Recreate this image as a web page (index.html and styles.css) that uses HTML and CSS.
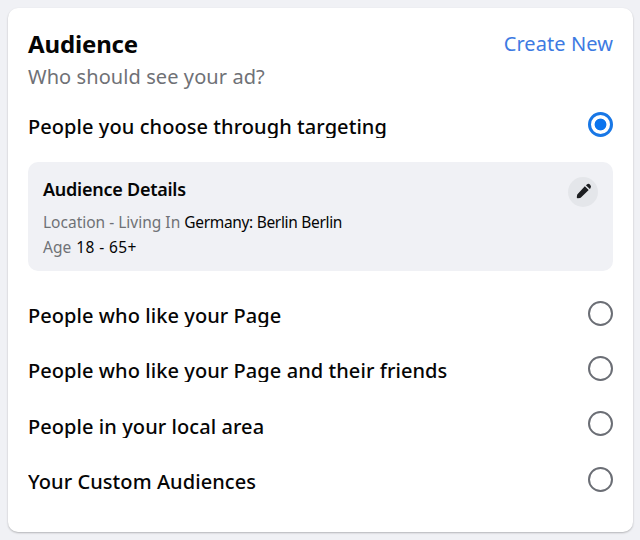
FILE: index.html
```html
<!DOCTYPE html>
<html lang="en">
<head>
<meta charset="utf-8">
<title>Audience</title>
<link rel="stylesheet" href="styles.css">
</head>
<body>
<main class="card">
  <header class="header">
    <h1 class="title">Audience</h1>
    <a class="create">Create New</a>
  </header>
  <p class="subtitle">Who should see your ad?</p>
  <div class="option first">
    <span class="label">People you choose through targeting</span>
    <span class="radio selected"></span>
  </div>
  <section class="details">
    <div class="info">
      <h2 class="details-title">Audience Details</h2>
      <p class="line"><span class="key">Location - Living In</span> <span class="value place">Germany: Berlin Berlin</span></p>
      <p class="line"><span class="key">Age</span> <span class="value age">18 - 65+</span></p>
    </div>
    <span class="edit">
      <svg width="30" height="30" viewBox="0 0 30 30" fill="#1c1e21">
        <path d="M16.8 9.3 20.7 13.1 13.2 20.2Q12.7 20.7 12 20.9L10 21.3Q8.7 21.5 8.8 20.3L9.1 18.1Q9.2 17.4 9.7 16.9Z"/>
        <path d="M17.9 8.2 18.9 7.4Q20.6 6.2 22.1 7.7 23.7 9.3 22.6 10.9L21.8 12Z"/>
      </svg>
    </span>
  </section>
  <div class="option"><span class="label">People who like your Page</span><span class="radio"></span></div>
  <div class="option"><span class="label">People who like your Page and their friends</span><span class="radio"></span></div>
  <div class="option lower"><span class="label">People in your local area</span><span class="radio"></span></div>
  <div class="option"><span class="label">Your Custom Audiences</span><span class="radio"></span></div>
</main>
</body>
</html>
```
FILE: styles.css
```css
* { box-sizing: border-box; }
body {
  margin: 0;
  padding: 8px 7px 8px 8px;
  height: 540px;
  overflow: hidden;
  background: #f0f1f5;
  font-family: "Noto Sans", "Open Sans", sans-serif;
  color: #050505;
}
h1, h2, p { margin: 0; }
.card {
  height: 524px;
  padding: 22px 20px 0;
  background: #fff;
  border-radius: 10px;
  box-shadow: 0 1px 2px rgba(0, 0, 0, 0.25);
}
.header { display: flex; justify-content: space-between; height: 32px; }
.title { font-size: 24px; line-height: 28px; font-weight: 700; letter-spacing: -0.15px; }
.create { font-size: 20px; line-height: 28px; letter-spacing: 0.08px; color: #3d7ae2; }
.subtitle { height: 50px; font-size: 20px; line-height: 30px; letter-spacing: 0.08px; color: #6f7176; }
.option {
  display: flex;
  justify-content: space-between;
  align-items: flex-start;
  height: 55px;
  white-space: nowrap;
}
.option.first { height: 50px; }
.option.lower { height: 56px; }
.label {
  height: 26px;
  overflow: hidden;
  font-size: 20px;
  line-height: 30px;
  font-weight: 500;
  letter-spacing: 0.07px;
}
.option.lower .label { height: 27px; line-height: 32px; }
.radio {
  width: 25px;
  height: 25px;
  border: 2px solid #6b6e75;
  border-radius: 50%;
}
.radio.selected {
  border: 3px solid #1877e6;
  background: radial-gradient(circle, #0b74ee 5.5px, #fff 6.3px);
}
.details {
  display: flex;
  justify-content: space-between;
  height: 109px;
  margin-bottom: 30px;
  padding: 15px;
  border-radius: 10px;
  background: #f0f1f5;
}
.details-title { height: 33px; font-size: 18px; line-height: 24px; font-weight: 600; letter-spacing: -0.25px; }
.line { font-size: 15.5px; line-height: 25px; white-space: nowrap; }
.key { color: #6f7176; }
.place { letter-spacing: -0.32px; }
.age { margin-left: 1px; letter-spacing: 0.4px; }
.edit {
  width: 30px;
  height: 30px;
  border-radius: 50%;
  background: #e4e6ea;
}
.edit svg { display: block; }
```
